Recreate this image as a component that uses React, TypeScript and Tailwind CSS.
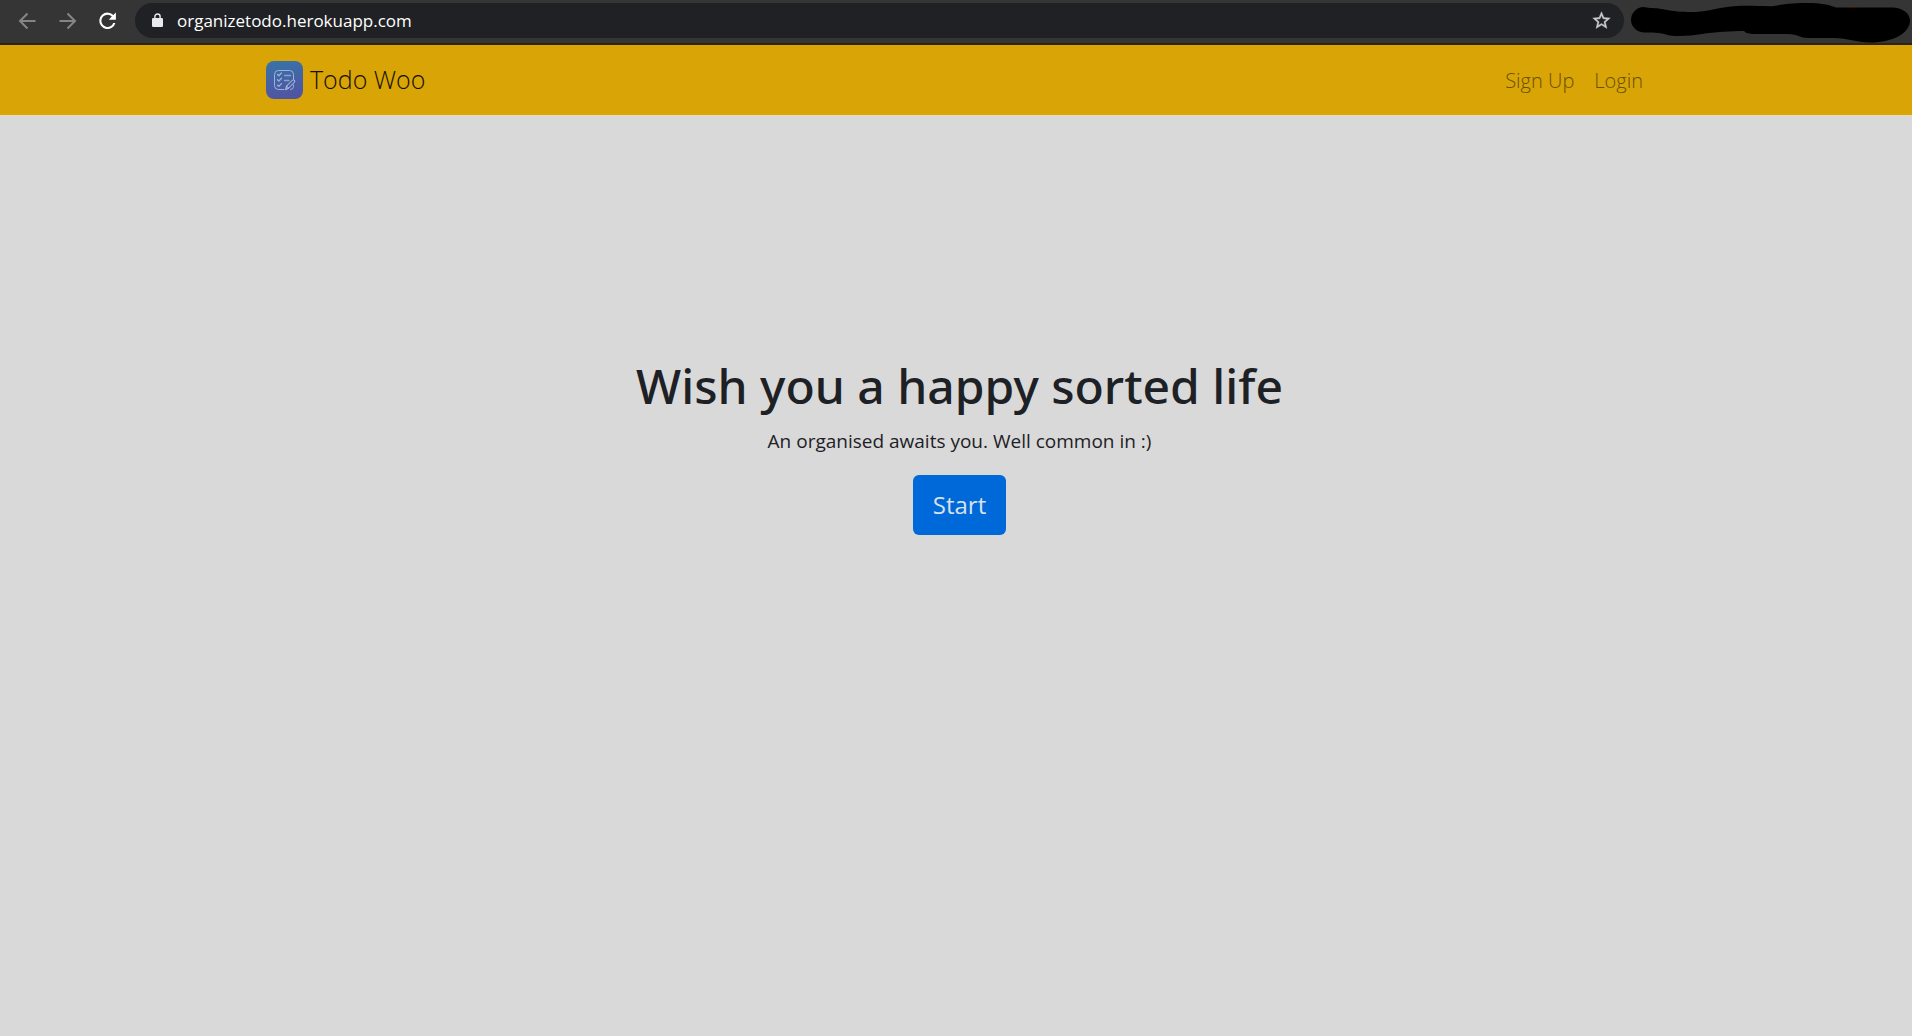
import React from "react";

function BackIcon() {
  return (
    <svg viewBox="0 0 24 24" className="size-6" fill="none" stroke="currentColor" strokeWidth="2">
      <path d="M20.500 12H5.500M12.500 4.500 5 12l7.500 7.500" />
    </svg>
  );
}

function ForwardIcon() {
  return (
    <svg viewBox="0 0 24 24" className="size-6" fill="none" stroke="currentColor" strokeWidth="2">
      <path d="M4.500 12h15M12.500 4.500 20 12l-7.500 7.500" />
    </svg>
  );
}

function ReloadIcon() {
  return (
    <svg viewBox="0 0 24 24" className="size-6" fill="currentColor">
      <path d="M18.400 6.100A8.200 8.200 0 0 0 12.500 3.600a8.200 8.200 0 1 0 7.900 10.300h-2.200A6.100 6.100 0 1 1 12.500 5.700c1.700 0 3.200.7 4.300 1.800L13.800 10.800h7.100V3.600z" />
    </svg>
  );
}

function LockIcon() {
  return (
    <svg viewBox="0 0 11 15" className="h-[15px] w-[11px] shrink-0">
      <rect x="0" y="5" width="11" height="9" rx="1.2" fill="#e8eaed" />
      <path d="M2.9 6V3.6a2.6 2.6 0 0 1 5.2 0V6" fill="none" stroke="#e8eaed" strokeWidth="1.4" />
    </svg>
  );
}

function StarIcon() {
  return (
    <svg viewBox="0 0 24 24" className="size-[21px]" fill="currentColor" stroke="currentColor" strokeWidth="0.5">
      <path d="M22 9.240l-7.190-.620L12 2 9.190 8.630 2 9.240l5.460 4.730L5.820 21 12 17.270 18.180 21l-1.630-7.030zM12 15.400l-3.760 2.270 1-4.280-3.320-2.880 4.380-.380L12 6.100l1.710 4.040 4.380.380-3.320 2.880 1 4.280z" />
    </svg>
  );
}

function Scribble() {
  return (
    <svg viewBox="0 0 282 43" className="h-[43px] w-[282px] shrink-0" fill="#000">
      <ellipse cx="222" cy="8" rx="5" ry="2" fill="#5b2d1c" />
      <path d="M13 7C5 8 1 14 1 20s5 12 13 12.500C24 33 28 32 36 34.500s24 1.500 36-.5 30-3 42-3c3 3 6 3 12 3h32c10 0 12 4 20 4h26c14 0 22 4.500 36 4.500 24 0 40-10 40-22C280 13 272 7.500 262 7.500h-56C198 4.500 192 3 176 3c-20 0-30 3-36 3.300-12 0-22-1-36 0-14 1-26 5.200-38 5.700C38 12.500 36 8 20 8z" />
    </svg>
  );
}

function Logo() {
  return (
    <svg viewBox="0 0 37 38" className="h-[38px] w-[37px] shrink-0" aria-hidden="true">
      <defs>
        <linearGradient id="logoFill" x1="0" y1="0" x2="0.2" y2="1">
          <stop offset="0" stopColor="#3675a8" />
          <stop offset="1" stopColor="#5055a2" />
        </linearGradient>
      </defs>
      <rect width="37" height="38" rx="8" fill="url(#logoFill)" />
      <g fill="none" stroke="#9fb2d8" strokeWidth="1" strokeLinecap="round" strokeLinejoin="round">
        <path d="M18 28.500h-5.500a4 4 0 0 1-4-4v-11a4 4 0 0 1 4-4h11a4 4 0 0 1 4 4V18M27.500 24v1.500a3 3 0 0 1-3 3" />
        <path d="m11.500 13.500 1.300 1.300 2.700-2.800M11.500 18.800l1.300 1.300 2.700-2.800M11.500 24.100l1.300 1.300 2.700-2.800" strokeWidth="1.300" />
        <path d="M18.500 14.500h6M18.500 19.500h4.500" strokeWidth="1.400" opacity="0.800" />
        <path d="m19.700 28.300.8-3.200 5.900-5.900q1.200-.8 2 0t0 2l-5.800 5.900z" stroke="#c3cde6" />
        <path d="m20.500 25.100 2.100 2" stroke="#c3cde6" />
      </g>
    </svg>
  );
}

function BrowserBar() {
  return (
    <header className="flex h-[45px] items-start border-b-2 border-[#2c2516] bg-[#353535] font-['Open_Sans',sans-serif]">
      <div className="flex h-[41px] min-w-0 flex-1 items-center pl-[15px]">
        <button aria-label="Back" className="mr-4 text-[#858585]"><BackIcon /></button>
        <button aria-label="Forward" className="mr-4 text-[#858585]"><ForwardIcon /></button>
        <button aria-label="Reload" className="mr-4 text-white"><ReloadIcon /></button>
        <div className="flex h-[35px] min-w-0 flex-1 items-center rounded-full bg-[#202124] pr-3 pl-[17px]">
          <LockIcon />
          <input
            aria-label="Address"
            defaultValue="organizetodo.herokuapp.com"
            className="ml-[14px] min-w-0 flex-1 bg-transparent text-[17px] text-white outline-none"
          />
          <button aria-label="Bookmark this page" className="text-[#c9cacd]"><StarIcon /></button>
        </div>
      </div>
      <div className="ml-[6px]"><Scribble /></div>
    </header>
  );
}

export default function App() {
  return (
    <div className="flex min-h-screen flex-col bg-[#d9d9d9] font-['Open_Sans',sans-serif] text-[#1d2125]">
      <BrowserBar />
      <nav className="border-b border-[#e6dcb4] bg-[#d9a406] pl-[7px]">
        <div className="mx-auto flex h-[70px] max-w-[1387px] items-center justify-between">
          <a href="#" className="flex items-center gap-[7px] text-[25px] font-light text-[#161001]">
            <Logo />
            Todo Woo
          </a>
          <div className="flex gap-5 pt-px pr-[10px] text-[20px] font-light text-[#6a5004]">
            <a href="#signup">Sign Up</a>
            <a href="#login">Login</a>
          </div>
        </div>
      </nav>
      <main className="flex flex-col items-center pt-[240px] pl-[7px] text-center">
        <h1 className="font-['Noto_Sans',sans-serif] text-[48px] leading-[60px] font-medium">Wish you a happy sorted life</h1>
        <p className="mt-[10px] text-[19px] leading-[30px]">An organised awaits you. Well common in :)</p>
        <button className="mt-[19px] h-[60px] rounded-md bg-[#0069d9] px-5 text-[24px] text-[#d9e1ea]">Start</button>
      </main>
    </div>
  );
}
